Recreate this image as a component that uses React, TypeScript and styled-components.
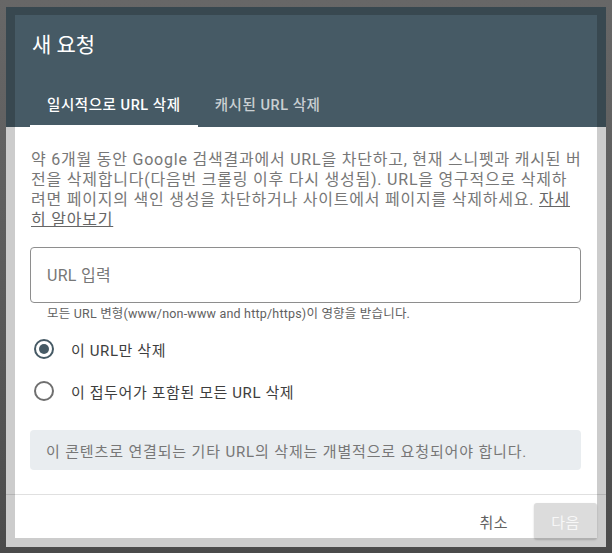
import styled, { createGlobalStyle } from "styled-components";

const GlobalStyle = createGlobalStyle`
    html, body {
        margin: 0;
        padding: 0;
    }
    body {
        background: linear-gradient(#676767 0%, #5c5c5c 45%, #4b4b4b 100%);
        font-family: Roboto, "Noto Sans CJK KR", "Noto Sans", sans-serif;
    }
    * { box-sizing: border-box; }
`;

const Page = styled.div`
    width: 612px;
    height: 553px;
    padding: 7px 6px 6px;
`;

const Dialog = styled.div`
    position: relative;
    width: 600px;
    height: 540px;
    background: #fff;
    display: flex;
    flex-direction: column;
    overflow: hidden;

    /* dimmed rim around the captured area */
    &::after {
        content: "";
        position: absolute;
        inset: 0;
        border-style: solid;
        border-color: rgba(0, 0, 0, 0.2);
        border-width: 8px 9px 9px 9px;
        pointer-events: none;
    }
`;

const Header = styled.div`
    height: 120px;
    background: #465a65;
    padding: 0 24px;
    display: flex;
    flex-direction: column;
`;

const Title = styled.h1`
    margin: 24px 0 0 2px;
    font-size: 21px;
    line-height: 28px;
    font-weight: 400;
    color: #fff;
`;

const Tabs = styled.div`
    margin-top: auto;
    height: 48px;
    display: flex;
`;

const Tab = styled.div<{ $active?: boolean }>`
    padding: 2px 17px 0;
    display: flex;
    align-items: center;
    font-size: 14.5px;
    font-weight: 500;
    letter-spacing: 0.55px;
    color: ${({ $active }) => ($active ? "#fff" : "rgba(255,255,255,0.72)")};
    border-bottom: 2px solid ${({ $active }) => ($active ? "#fff" : "transparent")};
`;

const Body = styled.div`
    flex: 1;
    padding: 23px 25px 0 24px;
    display: flex;
    flex-direction: column;
`;

const Intro = styled.p`
    margin: 0 0 0 1px;
    font-size: 16px;
    line-height: 20px;
    letter-spacing: 0.78px;
    white-space: nowrap;
    color: #777;
`;

const LearnMore = styled.a`
    color: #666;
    text-decoration: underline;
`;

const UrlInput = styled.input`
    margin-top: 17px;
    height: 56px;
    width: 100%;
    border: 1px solid #8e8e8e;
    border-radius: 4px;
    padding: 0 16px;
    font-family: inherit;
    font-size: 16px;
    letter-spacing: 0.3px;
    color: #333;
    outline: none;

    &::placeholder {
        color: #777;
    }
`;

const Helper = styled.div`
    margin: 3px 0 0 17px;
    font-size: 12.5px;
    line-height: 16px;
    letter-spacing: 0.2px;
    color: #616161;
`;

const RadioGroup = styled.div`
    margin-top: 6px;
    display: flex;
    flex-direction: column;
`;

const RadioRow = styled.label`
    height: 42px;
    display: flex;
    align-items: center;
    cursor: pointer;
`;

const RadioCircle = styled.span<{ $checked?: boolean }>`
    margin-left: 4px;
    width: 20px;
    height: 20px;
    border-radius: 50%;
    border: 2px solid ${({ $checked }) => ($checked ? "#465a65" : "#6f6f6f")};
    display: flex;
    align-items: center;
    justify-content: center;

    &::before {
        content: "";
        width: 10px;
        height: 10px;
        border-radius: 50%;
        background: ${({ $checked }) => ($checked ? "#465a65" : "transparent")};
    }
`;

const RadioLabel = styled.span`
    margin-left: 17px;
    font-size: 15px;
    letter-spacing: 0.6px;
    color: #3e3e3e;
`;

const InfoBox = styled.div`
    margin-top: 18px;
    height: 40px;
    padding: 0 16px;
    display: flex;
    align-items: center;
    background: #e9edf0;
    border-radius: 4px;
    font-size: 15px;
    letter-spacing: 0.85px;
    color: #777;
`;

const Footer = styled.div`
    height: 53px;
    border-top: 1px solid #e0e0e0;
    padding: 8px 9px 0 0;
    display: flex;
    justify-content: flex-end;
    align-items: flex-start;
    gap: 10px;
`;

const TextButton = styled.button`
    height: 36px;
    padding: 0 16px;
    border: none;
    background: none;
    font-family: inherit;
    font-size: 15px;
    letter-spacing: 0.5px;
    color: #616161;
    cursor: pointer;
`;

const PrimaryButton = styled.button`
    width: 63px;
    height: 36px;
    border: none;
    border-radius: 3px;
    background: #dcdcdc;
    box-shadow: 0 1px 2px rgba(0, 0, 0, 0.18);
    font-family: inherit;
    font-size: 15px;
    letter-spacing: 0.5px;
    color: #f7f7f7;
`;

export default function App() {
    return (
        <>
            <GlobalStyle />
            <Page>
                <Dialog>
                    <Header>
                        <Title>새 요청</Title>
                        <Tabs>
                            <Tab $active>일시적으로 URL 삭제</Tab>
                            <Tab>캐시된 URL 삭제</Tab>
                        </Tabs>
                    </Header>
                    <Body>
                        <Intro>
                            약 6개월 동안 Google 검색결과에서 URL을 차단하고, 현재 스니펫과 캐시된 버<br />
                            전을 삭제합니다(다음번 크롤링 이후 다시 생성됨). URL을 영구적으로 삭제하<br />
                            려면 페이지의 색인 생성을 차단하거나 사이트에서 페이지를 삭제하세요.{" "}
                            <LearnMore>자세<br />히 알아보기</LearnMore>
                        </Intro>
                        <UrlInput placeholder="URL 입력" />
                        <Helper>모든 URL 변형(www/non-www and http/https)이 영향을 받습니다.</Helper>
                        <RadioGroup>
                            <RadioRow>
                                <RadioCircle $checked />
                                <RadioLabel>이 URL만 삭제</RadioLabel>
                            </RadioRow>
                            <RadioRow>
                                <RadioCircle />
                                <RadioLabel>이 접두어가 포함된 모든 URL 삭제</RadioLabel>
                            </RadioRow>
                        </RadioGroup>
                        <InfoBox>이 콘텐츠로 연결되는 기타 URL의 삭제는 개별적으로 요청되어야 합니다.</InfoBox>
                    </Body>
                    <Footer>
                        <TextButton>취소</TextButton>
                        <PrimaryButton disabled>다음</PrimaryButton>
                    </Footer>
                </Dialog>
            </Page>
        </>
    );
}
